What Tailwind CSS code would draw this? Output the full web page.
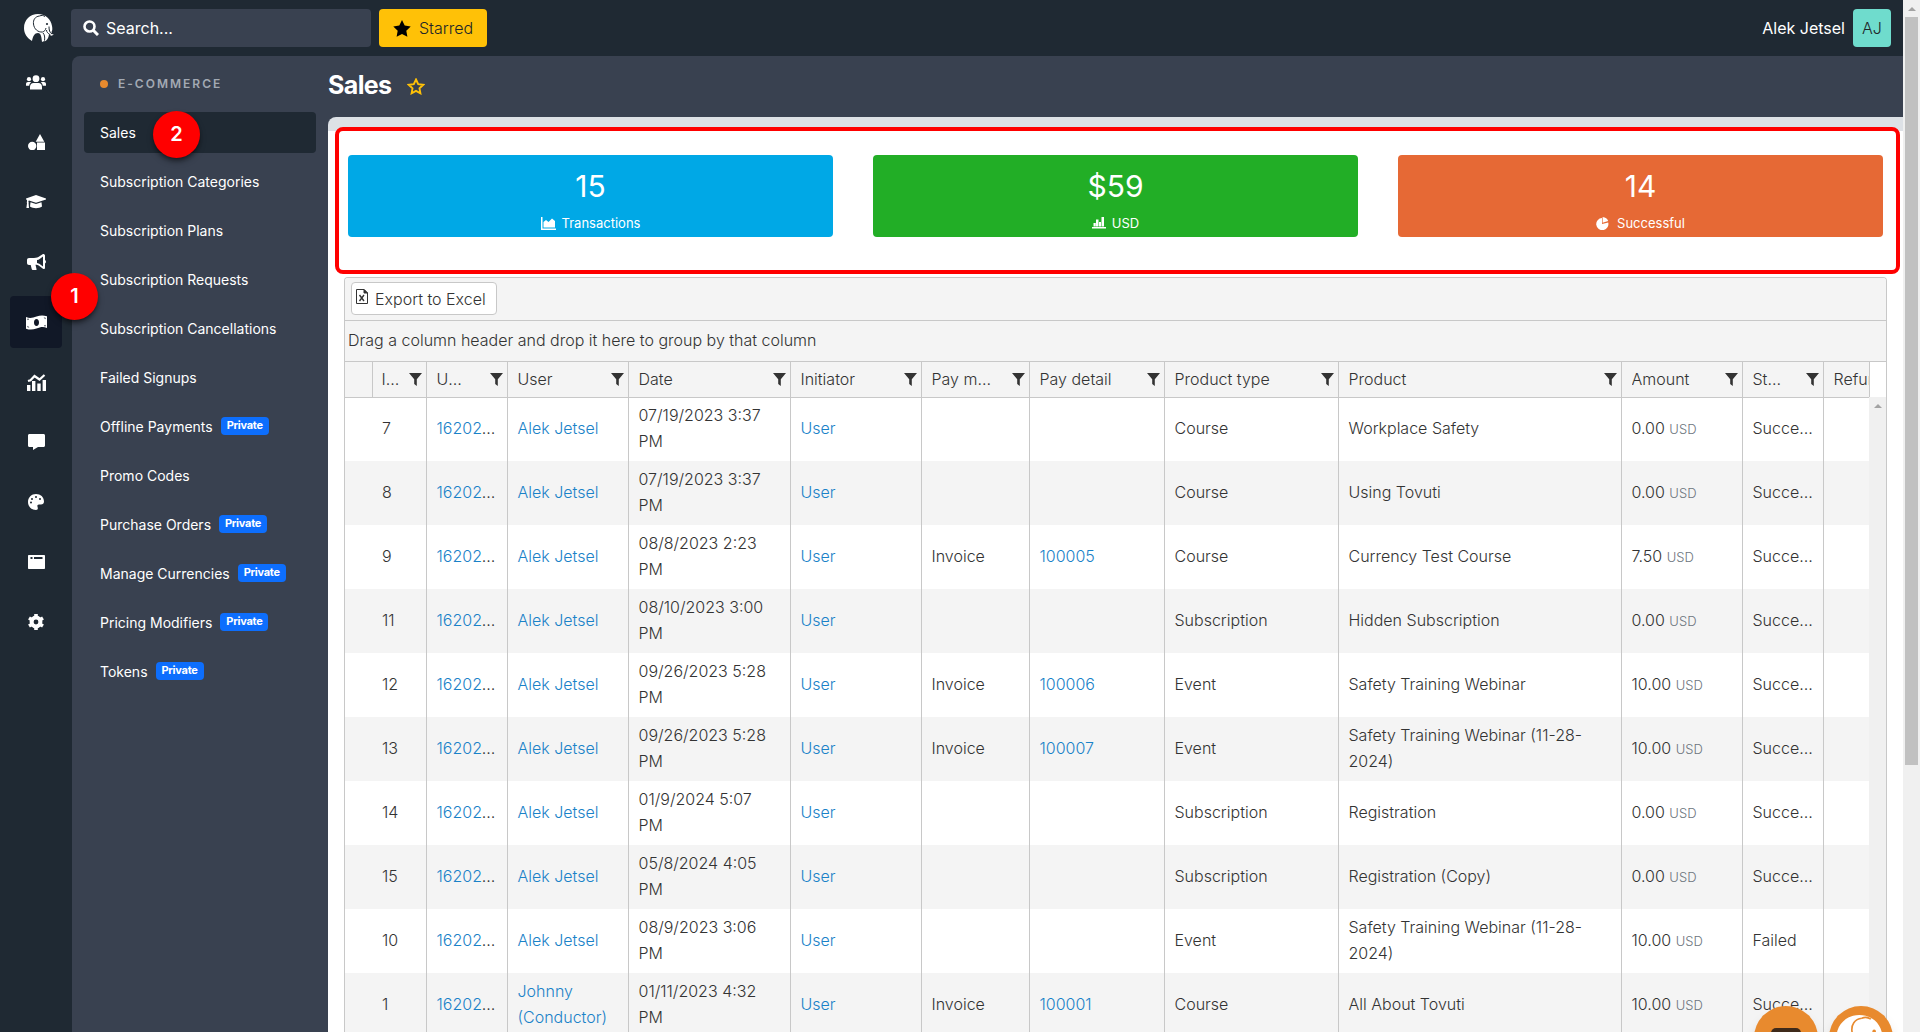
<!DOCTYPE html>
<html lang="en">
<head>
<meta charset="utf-8">
<title>Sales</title>
<script src="https://cdn.jsdelivr.net/npm/@tailwindcss/browser@4"></script>
</head>
<body class="h-screen overflow-hidden bg-[#1f2933] font-['Inter',sans-serif] text-base font-light text-[#333]">
<svg class="hidden">
  <symbol id="funnel" viewBox="0 0 16 16"><path d="M2 2h13L9.800 8.200V15L7.200 13V8.200z" fill="currentColor"/></symbol>
  <symbol id="elephant" viewBox="0 0 60 56">
    <path d="M28 0C12 0 0 12 0 28c0 11 6 20 16 26 2-10 5-16 12-16 6 0 7 8 8 18 3-1 5-2 6-5l-1 4c5-2 8-7 9-14 3 3 6 3 10 0-3 0-5-1-5-5 2-3 2-7 1-12C54 10 43 0 28 0z" fill="currentColor"/>
    <path d="M31 4C22 5 18 12 19 20c1 10 9 17 18 16 4-1 6-4 7-8M31 4c4-2 8-1 11 1M50 25c0 7 1 12 6 15M45 32c0 4 3 7 8 10M38 38c3 3 4 8 3 15" fill="none" stroke="var(--line,#1f2933)" stroke-width="2"/>
    <circle cx="46" cy="20" r="2.200" fill="var(--line,#1f2933)"/>
  </symbol>
</svg>
<div class="flex h-full">
<div class="flex h-full min-w-0 flex-1 flex-col">
  <header class="flex h-14 shrink-0 items-center text-white">
    <a href="#" aria-label="Home" class="flex w-[71px] justify-center pl-[6px]"><svg class="h-7 w-[30px]"><use href="#elephant"/></svg></a>
    <label class="flex h-[38px] w-[300px] items-center gap-[7px] rounded bg-[#394150] pl-3">
      <svg class="size-4" viewBox="0 0 16 16" fill="none" stroke="white" stroke-width="2.6"><circle cx="6.5" cy="6.5" r="5"/><path d="M10 10l5 5" stroke-width="3"/></svg>
      <input aria-label="Search" placeholder="Search..." class="w-60 bg-transparent font-normal outline-none placeholder:text-white">
    </label>
    <button class="ml-2 flex h-[38px] w-[108px] items-center justify-center gap-2 rounded bg-[#ffc107] text-[#212529]">
      <svg class="h-[17px] w-[18px]" viewBox="0 0 18 17"><path d="M9 0l2.700 5.600 6 .8-4.400 4.300 1.100 6.100L9 13.900l-5.400 2.900 1.100-6.100L.3 6.400l6-.8z" fill="black"/></svg>Starred
    </button>
    <span class="ml-auto font-normal">Alek Jetsel</span>
    <button class="mr-3 ml-2 size-[38px] rounded bg-[#6fdccd] text-[#212529]">AJ</button>
  </header>
  <div class="flex min-h-0 flex-1">
    <nav aria-label="Main" class="flex w-[72px] shrink-0 flex-col gap-2 pl-[10px] text-white">
      <a href="#" aria-label="Users" class="flex h-13 w-13 items-center justify-center"><svg class="h-[15px] w-5" viewBox="0 0 20 15" fill="currentColor"><circle cx="10" cy="3.700" r="3.400"/><circle cx="3" cy="4.200" r="2.100"/><circle cx="17" cy="4.200" r="2.100"/><path d="M4 14.500v-2.500C4 9.500 5.500 8 7.500 8h5c2 0 3.500 1.500 3.500 4v2.500zM0 10.800V9c0-1.200.8-2 2-2h2c.5 0 1 .2 1.300.5C4 8.200 3.300 9.300 3.200 10.800zM20 10.800V9c0-1.200-.8-2-2-2h-2c-.5 0-1 .2-1.300.5 1.300.7 2 1.800 2.100 3.300z"/></svg></a>
      <a href="#" aria-label="Content" class="flex h-13 w-13 items-center justify-center"><svg class="h-4 w-[17px]" viewBox="0 0 17 16" fill="currentColor"><circle cx="4.200" cy="12" r="4.200"/><path d="M12 0l4.300 7.800H7.700zM9 8.500h8V16H9z"/></svg></a>
      <a href="#" aria-label="Learning" class="flex h-13 w-13 items-center justify-center"><svg class="h-[14px] w-5" viewBox="0 0 20 14" fill="currentColor"><path d="M10 0l10 3.400v1L10 7.800 3 5.400l-.6.6c0 1 .6 1.500.2 2.300L3 13H.4L1 8.300C.6 7.500 1 6.800 1 6L.9 4.700 0 4.400v-1zM4.500 7.200L10 9l5.500-1.800.5 4.300c-3 2.300-9 2.300-12 0z"/></svg></a>
      <a href="#" aria-label="Marketing" class="flex h-13 w-13 items-center justify-center"><svg class="h-4 w-[19px]" viewBox="0 0 19 16" fill="currentColor"><path d="M16 0c1 0 2 .5 2 1.500V6c1.300.7 1.300 2.700 0 3.400v4.400c0 1.300-1 1.500-2 1l-4-3c-1-.7-2-1-3.500-1L9.500 15c.2.600 0 1-.8 1H5.800c-.6 0-.9-.3-1.100-.9L3.700 11H2c-1.200 0-2-.8-2-2V6c0-1.200.8-2 2-2h5c2.500 0 4-.5 5.500-1.700zm0 2.500L13 4.800c-1 .8-2 1.100-3 1.300v2.800c1.200.2 2 .5 3 1.300l3 2.300z"/></svg></a>
      <a href="#" aria-label="E-commerce" class="flex h-13 w-13 items-center justify-center rounded bg-[#111827]"><svg class="h-[15px] w-[21px]" viewBox="0 0 21 15" fill="currentColor" fill-rule="evenodd"><path d="M0 2c4 1.800 7 .7 10.500-.5S17 0 21 1.300V13c-4-1.800-7-.7-10.500.5S4 15 0 13.700zM10.500 4C9 4 8 5.500 8 7.500S9 11 10.500 11 13 9.500 13 7.500 12 4 10.500 4zM1.500 3.500v1.700l1.700-1.200zM19.500 11.500V9.800L17.800 11zM1.500 12.300l1.900.3-1.900-1.800zM19.500 2.700l-1.900-.3 1.900 1.800z"/></svg></a>
      <a href="#" aria-label="Reports" class="flex h-13 w-13 items-center justify-center"><svg class="h-[17px] w-[19px]" viewBox="0 0 19 17" fill="currentColor"><path d="M0 11h3.400v6H0zM5 7h3.400v10H5zM10.300 9.500h3.400V17h-3.400zM15.600 6H19v11h-3.400z"/><path d="M1 7l2.500-.8L7.500 2l5 3.500L17.500 1" fill="none" stroke="currentColor" stroke-width="2.200"/></svg></a>
      <a href="#" aria-label="Messages" class="flex h-13 w-13 items-center justify-center"><svg class="h-4 w-[17px]" viewBox="0 0 17 16" fill="currentColor"><path d="M1.500 0h14c.9 0 1.500.6 1.500 1.500v10c0 .9-.6 1.500-1.500 1.500H10l-5 3v-3H1.500C.6 13 0 12.400 0 11.500v-10C0 .6.6 0 1.500 0z"/></svg></a>
      <a href="#" aria-label="Design" class="flex h-13 w-13 items-center justify-center"><svg class="size-4" viewBox="0 0 16 16" fill="currentColor" fill-rule="evenodd"><path d="M8 0c4.500 0 8 3 8 7.500 0 2-1.200 3-3 3h-2c-1.500 0-2 1-1.500 2.200C10.200 14.500 10 16 8 16c-4.500 0-8-3.500-8-8s3.500-8 8-8zM3 7.500A1 1 0 103 9.500 1 1 0 003 7.500zM4 4a1 1 0 100 2 1 1 0 000-2zm4-2a1 1 0 100 2 1 1 0 000-2zm4 2a1 1 0 100 2 1 1 0 000-2z"/></svg></a>
      <a href="#" aria-label="Portal" class="flex h-13 w-13 items-center justify-center"><svg class="h-[14px] w-[17px]" viewBox="0 0 17 14" fill="currentColor" fill-rule="evenodd"><path d="M1 0h15c.6 0 1 .4 1 1v12c0 .6-.4 1-1 1H1c-.6 0-1-.4-1-1V1c0-.6.4-1 1-1zM2.500 2v2h2V2zM6 2v2h8.500V2z"/></svg></a>
      <a href="#" aria-label="Settings" class="flex h-13 w-13 items-center justify-center"><svg class="size-4" viewBox="0 0 16 16"><circle cx="8" cy="8" r="4.400" fill="none" stroke="currentColor" stroke-width="4"/><path d="M8 0v3M8 13v3M1 4l2.600 1.500M12.400 10.500L15 12M1 12l2.600-1.500M12.400 5.500L15 4" stroke="currentColor" stroke-width="3.600"/></svg></a>
    </nav>
    <div class="flex min-w-0 flex-1 rounded-tl-lg bg-[#394150]">
      <aside class="w-64 shrink-0 px-3 text-sm font-normal text-white">
        <h2 class="flex h-14 items-center gap-[10px] pl-4 text-xs font-semibold tracking-[2px] text-[#a3a9b3]"><span class="size-2 rounded-full bg-[#e88a2e]"></span>E-COMMERCE</h2>
        <ul id="menu" class="flex flex-col gap-2"></ul>
      </aside>
      <main class="flex min-w-0 flex-1 flex-col">
        <div class="flex h-[60px] shrink-0 items-center gap-4">
          <h1 class="text-[25px] font-bold tracking-tight text-white">Sales</h1>
          <button aria-label="Star this page"><svg class="h-[17px] w-[18px]" viewBox="0 0 18 17"><path d="M9 1.500l2.200 4.600 5 .7-3.700 3.500.9 5L9 12.900l-4.400 2.400.9-5L1.800 6.800l5-.7z" fill="none" stroke="#ffc107" stroke-width="1.900"/></svg></button>
        </div>
        <div class="mt-px h-[14px] shrink-0 rounded-tl-lg bg-[#dde1e6]"></div>
        <section class="flex min-h-0 flex-1 flex-col bg-white">
          <div class="grid shrink-0 grid-cols-3 gap-10 pt-6 pr-5 pb-10 pl-5 font-normal text-white">
            <div class="flex h-[82px] flex-col items-center rounded bg-[#00a8e6] pt-[11px]"><span class="text-3xl leading-10">15</span>
              <span class="flex items-center gap-[6px] pt-[7px] text-[13px] leading-5"><svg class="h-[13px] w-[15px]" viewBox="0 0 15 13" fill="currentColor"><path d="M0 0h1.500v11.500H15V13H0zM2.500 10.500V5l2.500-2 2.500 2L11 1.500 14 4v6.500z"/></svg>Transactions</span></div>
            <div class="flex h-[82px] flex-col items-center rounded bg-[#22ae26] pt-[11px]"><span class="text-3xl leading-10">$59</span>
              <span class="flex items-center gap-[6px] pt-[7px] text-[13px] leading-5"><svg class="h-3 w-[14px]" viewBox="0 0 14 12" fill="currentColor"><path d="M0 10h14v1.500H0zM1.500 6h2.300v3.500H1.500zM4 2.500h2.500v7H4zM7 5h2v4.500H7zM9.500 0H12v9.500H9.500z"/></svg>USD</span></div>
            <div class="flex h-[82px] flex-col items-center rounded bg-[#e66935] pt-[11px]"><span class="text-3xl leading-10">14</span>
              <span class="flex items-center gap-2 pt-[7px] text-[13px] leading-5"><svg class="size-[13px]" viewBox="0 0 13 13" fill="currentColor"><path d="M6 1v6l6.200-1.500A6.100 6.100 0 116 1z"/><path d="M6.600 0C9.500.2 11.500 1.700 12.200 4L6.600 5.800z"/></svg>Successful</span></div>
          </div>
          <div class="mr-4 ml-4 flex min-h-0 flex-1 flex-col overflow-hidden rounded-t border border-b-0 border-[#c8c8c8] bg-white">
            <div class="flex h-[43px] shrink-0 items-start border-b border-[#c8c8c8] bg-[#f4f4f4] pt-1 pl-[6px]">
              <button class="flex h-[33px] w-[146px] items-center gap-[7px] rounded border border-[#c8c8c8] bg-white pl-1">
                <svg class="mb-1 h-[15px] w-3" viewBox="0 0 12 15" fill="none" stroke="#333"><path d="M.5.5H8L11.500 4v10.500H.5z"/><path d="M8 .5V4h3.500z" fill="#333"/><path d="M3.500 6l4.500 6M8 6l-4.500 6" stroke-width="1.400"/></svg>Export to Excel</button>
            </div>
            <div class="flex h-[41px] shrink-0 items-center border-b border-[#c8c8c8] bg-[#f4f4f4] pb-[2px] pl-[3px]">Drag a column header and drop it here to group by that column</div>
            <div class="relative min-h-0 flex-1 overflow-hidden">
              <table class="w-full table-fixed">
                <colgroup><col class="w-[27px]"><col class="w-[54px]"><col class="w-[81px]"><col class="w-[121px]"><col class="w-[162px]"><col class="w-[131px]"><col class="w-[108px]"><col class="w-[135px]"><col class="w-[174px]"><col><col class="w-[121px]"><col class="w-[81px]"><col class="w-[46px]"><col class="w-[17px]"></colgroup>
                <thead><tr id="head" class="h-[35px]"></tr></thead>
                <tbody id="rows"></tbody>
              </table>
              <div class="absolute top-[35px] right-0 bottom-0 w-[17px] bg-[#f0f0f0] pt-[7px]"><svg class="mx-auto h-1 w-2" viewBox="0 0 8 4"><path d="M4 0l4 4H0z" fill="#a3a3a3"/></svg></div>
            </div>
          </div>
        </section>
      </main>
    </div>
  </div>
</div>
<div class="h-full w-[17px] shrink-0 bg-[#f0f0f0] px-[2px] pt-[7px]">
  <svg class="mx-auto h-1 w-2" viewBox="0 0 8 4"><path d="M4 0l4 4H0z" fill="#a3a3a3"/></svg>
  <div class="mt-[6px] h-[73%] bg-[#c1c1c1]"></div>
</div>
</div>

<div class="absolute top-[127px] right-[20px] left-[335px] h-[147px] rounded-lg border-4 border-[#ff0000]"></div>
<div class="absolute top-[273px] left-[51px] flex size-[47px] items-center justify-center rounded-full bg-[#ff0000] pb-px text-xl font-semibold text-white shadow-md shadow-black/50">1</div>
<div class="absolute top-[111px] left-[153px] flex size-[47px] items-center justify-center rounded-full bg-[#ff0000] pb-px text-xl font-semibold text-white shadow-md shadow-black/50">2</div>
<button aria-label="Chat" class="absolute right-[102px] bottom-[-38px] flex size-16 items-center justify-center rounded-full bg-[#e88a2e] shadow-lg shadow-black/20"><svg class="size-8" viewBox="0 0 32 32"><rect x="1" y="6" width="30" height="22" rx="5" fill="#3f2a1a"/></svg></button>
<button aria-label="Help" class="absolute right-[27px] bottom-[-38px] flex size-16 items-center justify-center rounded-full bg-[#e88a2e] text-white shadow-lg shadow-black/20 [--line:#e88a2e]"><svg class="h-[46px] w-[50px]"><use href="#elephant"/></svg></button>

<script>
const menu = [['Sales'],['Subscription Categories'],['Subscription Plans'],['Subscription Requests'],['Subscription Cancellations'],['Failed Signups'],['Offline Payments',1],['Promo Codes'],['Purchase Orders',1],['Manage Currencies',1],['Pricing Modifiers',1],['Tokens',1]];
document.getElementById('menu').innerHTML = menu.map(([t,p],i)=>
  `<li><a href="#" class="flex h-[41px] items-center gap-2 rounded pl-4 ${i?'':'bg-[#1f2933]'}">${t}${p?'<span class="mb-px flex h-[18px] w-12 items-center justify-center rounded bg-[#0d6efd] text-[11px] font-bold tracking-tight">Private</span>':''}</a></li>`).join('');
const heads = ['','ID number','User ID','User','Date','Initiator','Pay method','Pay detail','Product type','Product','Amount','Status','Refund'];
const gap = i => i==1?'ml-1.5':i==2||i==11?'ml-5':'ml-4';
document.getElementById('head').innerHTML = heads.map((h,i)=>
  `<th class="border-b ${i?'border-l':''} border-[#c8c8c8] bg-[#f4f4f4] p-0 text-left font-light">${h?`<div class="flex items-center ${i<12?'pr-[3px]':''} ${i==1?'pl-[9px]':'pl-[10px]'}"><span class="flex-1 overflow-hidden whitespace-nowrap ${i<12?'text-ellipsis':''}">${h}</span>${i<12?`<button aria-label="Filter" class="${gap(i)} shrink-0"><svg class="size-4"><use href="#funnel"/></svg></button>`:''}</div>`:''}</th>`).join('')
  + '<th class="border-b border-l border-[#c8c8c8]"></th>';
const J='Alek Jetsel', W='Safety Training Webinar', W2=W+' (11-28-2024)';
const data = [
['7',J,'07/19/2023 3:37 PM','','','Course','Workplace Safety','0.00','Successful'],
['8',J,'07/19/2023 3:37 PM','','','Course','Using Tovuti','0.00','Successful'],
['9',J,'08/8/2023 2:23 PM','Invoice','100005','Course','Currency Test Course','7.50','Successful'],
['11',J,'08/10/2023 3:00 PM','','','Subscription','Hidden Subscription','0.00','Successful'],
['12',J,'09/26/2023 5:28 PM','Invoice','100006','Event',W,'10.00','Successful'],
['13',J,'09/26/2023 5:28 PM','Invoice','100007','Event',W2,'10.00','Successful'],
['14',J,'01/9/2024 5:07 PM','','','Subscription','Registration','0.00','Successful'],
['15',J,'05/8/2024 4:05 PM','','','Subscription','Registration (Copy)','0.00','Successful'],
['10',J,'08/9/2023 3:06 PM','','','Event',W2,'10.00','Failed'],
['1','Johnny (Conductor)','01/11/2023 4:32 PM','Invoice','100001','Course','All About Tovuti','10.00','Successful']];
const link = t => t?`<a href="#" class="text-[#1a82c8]">${t}</a>`:'';
const cut = t => `<div class="overflow-hidden text-ellipsis whitespace-nowrap">${t}</div>`;
document.getElementById('rows').innerHTML = data.map(([id,u,d,pm,pd,pt,p,a,s])=>{
  const cells=['',id,cut(link('1620240')),link(u),d,link('User'),pm,link(pd),pt,p,`${a} <span class="text-[13px] text-[#6c757d]">USD</span>`,cut(s),'',''];
  return `<tr class="h-16 odd:bg-white even:bg-[#f4f4f4]">${cells.map((c,i)=>`<td class="${i>1&&i<13?'border-l':''} border-[#c8c8c8] pt-0 pb-[2px] leading-[26px] ${i==4?'pr-4 pl-[10px]':i?'pr-[6px] pl-[10px]':''}">${c}</td>`).join('')}</tr>`}).join('');
</script>
</body>
</html>
